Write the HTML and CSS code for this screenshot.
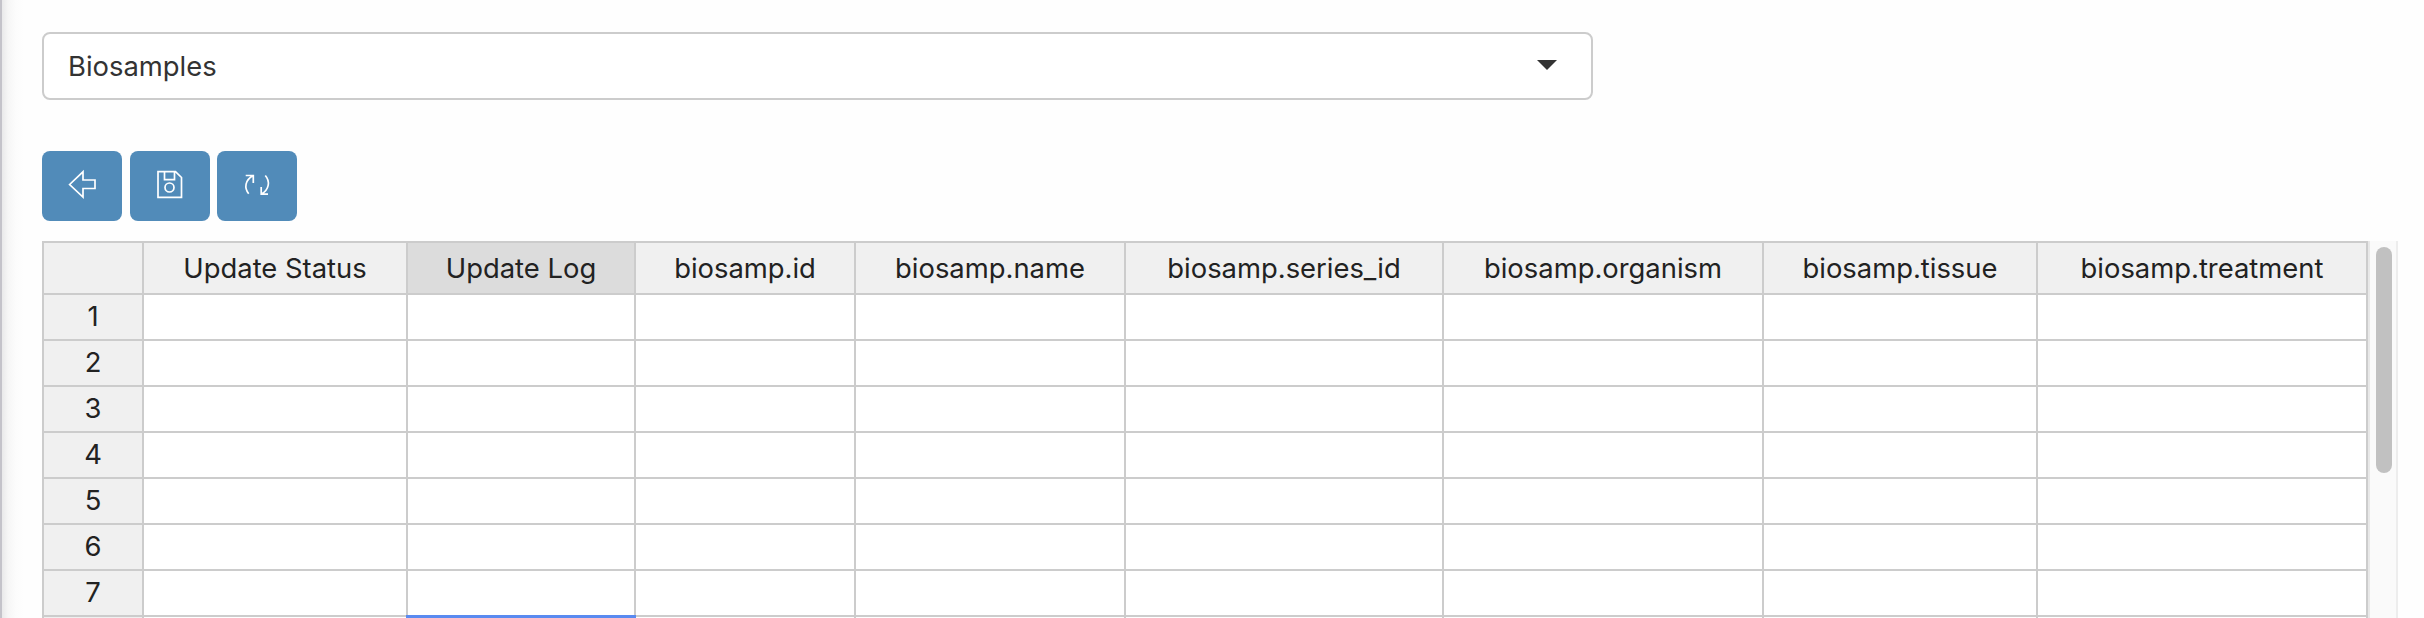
FILE: index.html
```html
<!DOCTYPE html>
<html lang="en">
<head>
    <meta charset="UTF-8">
    <title>Biosamples</title>
    <link rel="stylesheet" href="styles.css">
</head>
<body>

    <div class="content">
        <div class="select-box">
            <span>Biosamples</span>
            <span class="caret"></span>
        </div>

        <div class="toolbar">
            <button type="button" aria-label="Back">
                <svg width="80" height="70" viewBox="0 0 80 70">
                    <path d="M27.6 33.5 L41 20.8 V29 H53 V37.5 H41 V46 Z"/>
                </svg>
            </button>
            <button type="button" aria-label="Save">
                <svg width="80" height="70" viewBox="0 0 80 70">
                    <path d="M28 20.7 H45.5 L51.5 26.5 V46.3 H28 Z M34.5 21 V28.7 H44.5 V21"/>
                    <circle cx="39.5" cy="36.5" r="4.5"/>
                </svg>
            </button>
            <button type="button" aria-label="Refresh">
                <svg width="80" height="70" viewBox="0 0 80 70">
                    <path d="M28.7 24.5 H36.3 V32 M36 24.8 C28 29 27 37 31.7 42.8"/>
                    <path d="M51 43.2 H44.2 V36 M44.5 43 C52 38.5 53.5 30.5 48.3 24.5"/>
                </svg>
            </button>
        </div>

        <div class="sheet">
            <table>
                <colgroup>
                    <col class="col-num">
                    <col class="col-status">
                    <col class="col-log">
                    <col class="col-id">
                    <col class="col-name">
                    <col class="col-series">
                    <col class="col-organism">
                    <col class="col-tissue">
                    <col class="col-treatment">
                </colgroup>
                <thead>
                    <tr>
                        <th></th>
                        <th>Update Status</th>
                        <th class="active">Update Log</th>
                        <th>biosamp.id</th>
                        <th>biosamp.name</th>
                        <th>biosamp.series_id</th>
                        <th>biosamp.organism</th>
                        <th>biosamp.tissue</th>
                        <th>biosamp.treatment</th>
                    </tr>
                </thead>
                <tbody>
                    <tr><th>1</th><td></td><td></td><td></td><td></td><td></td><td></td><td></td><td></td></tr>
                    <tr><th>2</th><td></td><td></td><td></td><td></td><td></td><td></td><td></td><td></td></tr>
                    <tr><th>3</th><td></td><td></td><td></td><td></td><td></td><td></td><td></td><td></td></tr>
                    <tr><th>4</th><td></td><td></td><td></td><td></td><td></td><td></td><td></td><td></td></tr>
                    <tr><th>5</th><td></td><td></td><td></td><td></td><td></td><td></td><td></td><td></td></tr>
                    <tr><th>6</th><td></td><td></td><td></td><td></td><td></td><td></td><td></td><td></td></tr>
                    <tr><th>7</th><td></td><td class="above-selected"></td><td></td><td></td><td></td><td></td><td></td><td></td></tr>
                    <tr><th></th><td></td><td></td><td></td><td></td><td></td><td></td><td></td><td></td></tr>
                </tbody>
            </table>
            <div class="scrollbar">
                <div class="thumb"></div>
            </div>
        </div>
    </div>

</body>
</html>
```
FILE: styles.css
```css
* {
    margin: 0;
    padding: 0;
    box-sizing: border-box;
}

body {
    height: 618px;
    overflow: hidden;
    font-family: Inter, "Liberation Sans", sans-serif;
    font-size: 27.4px;
    background-color: #fefefe;
    color: #222;
}

.content {
    height: 618px;
    overflow: hidden;
    padding: 32px 26px 0 40px;
    border-left: 2px solid #c4c3ca;
    background: linear-gradient(to right, #e9e9ea, #f6f6f6 6px, #fcfcfc 14px, #fefefe 22px);
}

.select-box {
    display: flex;
    align-items: center;
    justify-content: space-between;
    width: 1551px;
    height: 68px;
    padding: 0 34px 0 24px;
    border: 2px solid #ccc;
    border-radius: 8px;
    background-color: #fff;
    color: #333;
}

.caret {
    margin-bottom: 2px;
    border: 10px solid transparent;
    border-top-color: #333;
    border-bottom: none;
}

.toolbar {
    display: flex;
    gap: 7.5px;
    margin: 51px 0 20px;
}

.toolbar button {
    width: 80px;
    height: 70px;
    border: none;
    border-radius: 8px;
    background-color: #518bb9;
    cursor: pointer;
}

.toolbar svg {
    display: block;
    fill: none;
    stroke: #fff;
    stroke-width: 1.7;
}

.sheet {
    display: flex;
    align-items: flex-start;
}

table {
    width: 2326px;
    table-layout: fixed;
    border-collapse: separate;
    border-spacing: 0;
    border-top: 2px solid #ccc;
    border-left: 2px solid #ccc;
    background-color: #fff;
}

th, td {
    height: 46px;
    padding-bottom: 2px;
    border-right: 2px solid #ccc;
    border-bottom: 2px solid #ccc;
    font-weight: normal;
    line-height: 40px;
    text-align: center;
    white-space: nowrap;
}

th {
    background-color: #f0f0f0;
}

thead th {
    height: 52px;
    padding-bottom: 0;
}

th.active {
    background-color: #dcdcdc;
}

td.above-selected {
    position: relative;
}

/* top edge of the selected cell */
td.above-selected::after {
    content: "";
    position: absolute;
    left: -2px;
    right: -2px;
    bottom: -3px;
    height: 3px;
    background-color: #5a8af0;
}

.col-num { width: 100px; }
.col-status { width: 264px; }
.col-log { width: 228px; }
.col-id { width: 220px; }
.col-name { width: 270px; }
.col-series { width: 318px; }
.col-organism { width: 320px; }
.col-tissue { width: 274px; }
.col-treatment { width: 330px; }

.scrollbar {
    width: 30px;
    height: 420px;
    padding: 6px;
    border-left: 2px solid #e8e8e8;
    border-right: 2px solid #ededed;
    background-color: #fafafa;
}

.thumb {
    width: 16px;
    height: 226px;
    border-radius: 8px;
    background-color: #c1c1c1;
}
```
